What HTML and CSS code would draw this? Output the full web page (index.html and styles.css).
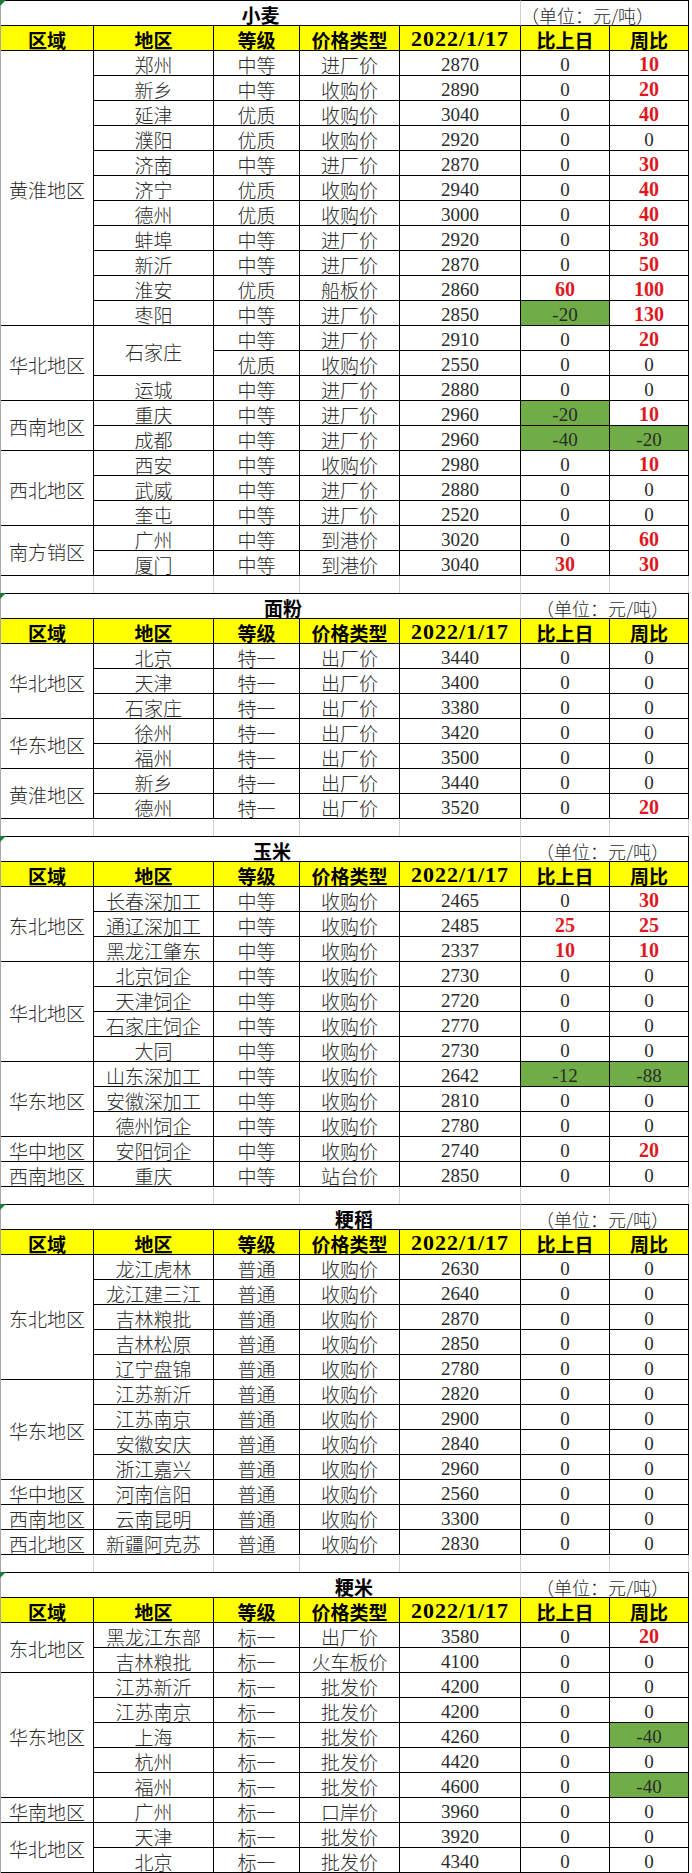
FILE: index.html
```html
<!DOCTYPE html>
<html lang="zh-CN">
<head>
<meta charset="utf-8">
<title>粮食价格</title>
<link rel="stylesheet" href="styles.css">
</head>
<body>

<section class="block">
  <div class="sheet">
    <div class="c ttl">小麦</div><div class="c unit unit-first">（单位：元/吨）</div>
    <div class="c hd">区域</div><div class="c hd">地区</div><div class="c hd">等级</div><div class="c hd">价格类型</div><div class="c hd date">2022/1/17</div><div class="c hd">比上日</div><div class="c hd">周比</div>

    <div class="c g s11">黄淮地区</div>
    <div class="c">郑州</div><div class="c">中等</div><div class="c">进厂价</div><div class="c n">2870</div><div class="c n">0</div><div class="c n up">10</div>
    <div class="c">新乡</div><div class="c">中等</div><div class="c">收购价</div><div class="c n">2890</div><div class="c n">0</div><div class="c n up">20</div>
    <div class="c">延津</div><div class="c">优质</div><div class="c">收购价</div><div class="c n">3040</div><div class="c n">0</div><div class="c n up">40</div>
    <div class="c">濮阳</div><div class="c">优质</div><div class="c">收购价</div><div class="c n">2920</div><div class="c n">0</div><div class="c n">0</div>
    <div class="c">济南</div><div class="c">中等</div><div class="c">进厂价</div><div class="c n">2870</div><div class="c n">0</div><div class="c n up">30</div>
    <div class="c">济宁</div><div class="c">优质</div><div class="c">收购价</div><div class="c n">2940</div><div class="c n">0</div><div class="c n up">40</div>
    <div class="c">德州</div><div class="c">优质</div><div class="c">收购价</div><div class="c n">3000</div><div class="c n">0</div><div class="c n up">40</div>
    <div class="c">蚌埠</div><div class="c">中等</div><div class="c">进厂价</div><div class="c n">2920</div><div class="c n">0</div><div class="c n up">30</div>
    <div class="c">新沂</div><div class="c">中等</div><div class="c">进厂价</div><div class="c n">2870</div><div class="c n">0</div><div class="c n up">50</div>
    <div class="c">淮安</div><div class="c">优质</div><div class="c">船板价</div><div class="c n">2860</div><div class="c n up">60</div><div class="c n up">100</div>
    <div class="c">枣阳</div><div class="c">中等</div><div class="c">进厂价</div><div class="c n">2850</div><div class="c n dn">-20</div><div class="c n up">130</div>

    <div class="c g s3">华北地区</div>
    <div class="c s2">石家庄</div><div class="c">中等</div><div class="c">进厂价</div><div class="c n">2910</div><div class="c n">0</div><div class="c n up">20</div>
    <div class="c">优质</div><div class="c">收购价</div><div class="c n">2550</div><div class="c n">0</div><div class="c n">0</div>
    <div class="c">运城</div><div class="c">中等</div><div class="c">进厂价</div><div class="c n">2880</div><div class="c n">0</div><div class="c n">0</div>

    <div class="c g s2">西南地区</div>
    <div class="c">重庆</div><div class="c">中等</div><div class="c">进厂价</div><div class="c n">2960</div><div class="c n dn">-20</div><div class="c n up">10</div>
    <div class="c">成都</div><div class="c">中等</div><div class="c">进厂价</div><div class="c n">2960</div><div class="c n dn">-40</div><div class="c n dn">-20</div>

    <div class="c g s3">西北地区</div>
    <div class="c">西安</div><div class="c">中等</div><div class="c">收购价</div><div class="c n">2980</div><div class="c n">0</div><div class="c n up">10</div>
    <div class="c">武威</div><div class="c">中等</div><div class="c">进厂价</div><div class="c n">2880</div><div class="c n">0</div><div class="c n">0</div>
    <div class="c">奎屯</div><div class="c">中等</div><div class="c">进厂价</div><div class="c n">2520</div><div class="c n">0</div><div class="c n">0</div>

    <div class="c g s2">南方销区</div>
    <div class="c">广州</div><div class="c">中等</div><div class="c">到港价</div><div class="c n">3020</div><div class="c n">0</div><div class="c n up">60</div>
    <div class="c">厦门</div><div class="c">中等</div><div class="c">到港价</div><div class="c n">3040</div><div class="c n up">30</div><div class="c n up">30</div>
  </div>
  <div class="sheet spacer"><div class="b"></div><div class="b"></div><div class="b"></div><div class="b"></div><div class="b"></div><div class="b"></div><div class="b"></div></div>
</section>

<section class="block">
  <div class="sheet">
    <div class="c ttl ttl-flour">面粉</div><div class="c unit">（单位：元/吨）</div>
    <div class="c hd">区域</div><div class="c hd">地区</div><div class="c hd">等级</div><div class="c hd">价格类型</div><div class="c hd date">2022/1/17</div><div class="c hd">比上日</div><div class="c hd">周比</div>

    <div class="c g s3">华北地区</div>
    <div class="c">北京</div><div class="c">特一</div><div class="c">出厂价</div><div class="c n">3440</div><div class="c n">0</div><div class="c n">0</div>
    <div class="c">天津</div><div class="c">特一</div><div class="c">出厂价</div><div class="c n">3400</div><div class="c n">0</div><div class="c n">0</div>
    <div class="c">石家庄</div><div class="c">特一</div><div class="c">出厂价</div><div class="c n">3380</div><div class="c n">0</div><div class="c n">0</div>

    <div class="c g s2">华东地区</div>
    <div class="c">徐州</div><div class="c">特一</div><div class="c">出厂价</div><div class="c n">3420</div><div class="c n">0</div><div class="c n">0</div>
    <div class="c">福州</div><div class="c">特一</div><div class="c">出厂价</div><div class="c n">3500</div><div class="c n">0</div><div class="c n">0</div>

    <div class="c g s2">黄淮地区</div>
    <div class="c">新乡</div><div class="c">特一</div><div class="c">出厂价</div><div class="c n">3440</div><div class="c n">0</div><div class="c n">0</div>
    <div class="c">德州</div><div class="c">特一</div><div class="c">出厂价</div><div class="c n">3520</div><div class="c n">0</div><div class="c n up">20</div>
  </div>
  <div class="sheet spacer"><div class="b"></div><div class="b"></div><div class="b"></div><div class="b"></div><div class="b"></div><div class="b"></div><div class="b"></div></div>
</section>

<section class="block">
  <div class="sheet">
    <div class="c ttl ttl-corn">玉米</div><div class="c unit">（单位：元/吨）</div>
    <div class="c hd">区域</div><div class="c hd">地区</div><div class="c hd">等级</div><div class="c hd">价格类型</div><div class="c hd date">2022/1/17</div><div class="c hd">比上日</div><div class="c hd">周比</div>

    <div class="c g s3">东北地区</div>
    <div class="c">长春深加工</div><div class="c">中等</div><div class="c">收购价</div><div class="c n">2465</div><div class="c n">0</div><div class="c n up">30</div>
    <div class="c">通辽深加工</div><div class="c">中等</div><div class="c">收购价</div><div class="c n">2485</div><div class="c n up">25</div><div class="c n up">25</div>
    <div class="c">黑龙江肇东</div><div class="c">中等</div><div class="c">收购价</div><div class="c n">2337</div><div class="c n up">10</div><div class="c n up">10</div>

    <div class="c g s4">华北地区</div>
    <div class="c">北京饲企</div><div class="c">中等</div><div class="c">收购价</div><div class="c n">2730</div><div class="c n">0</div><div class="c n">0</div>
    <div class="c">天津饲企</div><div class="c">中等</div><div class="c">收购价</div><div class="c n">2720</div><div class="c n">0</div><div class="c n">0</div>
    <div class="c">石家庄饲企</div><div class="c">中等</div><div class="c">收购价</div><div class="c n">2770</div><div class="c n">0</div><div class="c n">0</div>
    <div class="c">大同</div><div class="c">中等</div><div class="c">收购价</div><div class="c n">2730</div><div class="c n">0</div><div class="c n">0</div>

    <div class="c g s3">华东地区</div>
    <div class="c">山东深加工</div><div class="c">中等</div><div class="c">收购价</div><div class="c n">2642</div><div class="c n dn">-12</div><div class="c n dn">-88</div>
    <div class="c">安徽深加工</div><div class="c">中等</div><div class="c">收购价</div><div class="c n">2810</div><div class="c n">0</div><div class="c n">0</div>
    <div class="c">德州饲企</div><div class="c">中等</div><div class="c">收购价</div><div class="c n">2780</div><div class="c n">0</div><div class="c n">0</div>

    <div class="c g">华中地区</div>
    <div class="c">安阳饲企</div><div class="c">中等</div><div class="c">收购价</div><div class="c n">2740</div><div class="c n">0</div><div class="c n up">20</div>

    <div class="c g">西南地区</div>
    <div class="c">重庆</div><div class="c">中等</div><div class="c">站台价</div><div class="c n">2850</div><div class="c n">0</div><div class="c n">0</div>
  </div>
  <div class="sheet spacer"><div class="b"></div><div class="b"></div><div class="b"></div><div class="b"></div><div class="b"></div><div class="b"></div><div class="b"></div></div>
</section>

<section class="block">
  <div class="sheet">
    <div class="c ttl ttl-rice">粳稻</div><div class="c unit">（单位：元/吨）</div>
    <div class="c hd">区域</div><div class="c hd">地区</div><div class="c hd">等级</div><div class="c hd">价格类型</div><div class="c hd date">2022/1/17</div><div class="c hd">比上日</div><div class="c hd">周比</div>

    <div class="c g s5">东北地区</div>
    <div class="c">龙江虎林</div><div class="c">普通</div><div class="c">收购价</div><div class="c n">2630</div><div class="c n">0</div><div class="c n">0</div>
    <div class="c">龙江建三江</div><div class="c">普通</div><div class="c">收购价</div><div class="c n">2640</div><div class="c n">0</div><div class="c n">0</div>
    <div class="c">吉林粮批</div><div class="c">普通</div><div class="c">收购价</div><div class="c n">2870</div><div class="c n">0</div><div class="c n">0</div>
    <div class="c">吉林松原</div><div class="c">普通</div><div class="c">收购价</div><div class="c n">2850</div><div class="c n">0</div><div class="c n">0</div>
    <div class="c">辽宁盘锦</div><div class="c">普通</div><div class="c">收购价</div><div class="c n">2780</div><div class="c n">0</div><div class="c n">0</div>

    <div class="c g s4">华东地区</div>
    <div class="c">江苏新沂</div><div class="c">普通</div><div class="c">收购价</div><div class="c n">2820</div><div class="c n">0</div><div class="c n">0</div>
    <div class="c">江苏南京</div><div class="c">普通</div><div class="c">收购价</div><div class="c n">2900</div><div class="c n">0</div><div class="c n">0</div>
    <div class="c">安徽安庆</div><div class="c">普通</div><div class="c">收购价</div><div class="c n">2840</div><div class="c n">0</div><div class="c n">0</div>
    <div class="c">浙江嘉兴</div><div class="c">普通</div><div class="c">收购价</div><div class="c n">2960</div><div class="c n">0</div><div class="c n">0</div>

    <div class="c g">华中地区</div>
    <div class="c">河南信阳</div><div class="c">普通</div><div class="c">收购价</div><div class="c n">2560</div><div class="c n">0</div><div class="c n">0</div>

    <div class="c g">西南地区</div>
    <div class="c">云南昆明</div><div class="c">普通</div><div class="c">收购价</div><div class="c n">3300</div><div class="c n">0</div><div class="c n">0</div>

    <div class="c g">西北地区</div>
    <div class="c">新疆阿克苏</div><div class="c">普通</div><div class="c">收购价</div><div class="c n">2830</div><div class="c n">0</div><div class="c n">0</div>
  </div>
  <div class="sheet spacer"><div class="b"></div><div class="b"></div><div class="b"></div><div class="b"></div><div class="b"></div><div class="b"></div><div class="b"></div></div>
</section>

<section class="block">
  <div class="sheet">
    <div class="c ttl ttl-rice">粳米</div><div class="c unit">（单位：元/吨）</div>
    <div class="c hd">区域</div><div class="c hd">地区</div><div class="c hd">等级</div><div class="c hd">价格类型</div><div class="c hd date">2022/1/17</div><div class="c hd">比上日</div><div class="c hd">周比</div>

    <div class="c g s2">东北地区</div>
    <div class="c">黑龙江东部</div><div class="c">标一</div><div class="c">出厂价</div><div class="c n">3580</div><div class="c n">0</div><div class="c n up">20</div>
    <div class="c">吉林粮批</div><div class="c">标一</div><div class="c">火车板价</div><div class="c n">4100</div><div class="c n">0</div><div class="c n">0</div>

    <div class="c g s5">华东地区</div>
    <div class="c">江苏新沂</div><div class="c">标一</div><div class="c">批发价</div><div class="c n">4200</div><div class="c n">0</div><div class="c n">0</div>
    <div class="c">江苏南京</div><div class="c">标一</div><div class="c">批发价</div><div class="c n">4200</div><div class="c n">0</div><div class="c n">0</div>
    <div class="c">上海</div><div class="c">标一</div><div class="c">批发价</div><div class="c n">4260</div><div class="c n">0</div><div class="c n dn">-40</div>
    <div class="c">杭州</div><div class="c">标一</div><div class="c">批发价</div><div class="c n">4420</div><div class="c n">0</div><div class="c n">0</div>
    <div class="c">福州</div><div class="c">标一</div><div class="c">批发价</div><div class="c n">4600</div><div class="c n">0</div><div class="c n dn">-40</div>

    <div class="c g">华南地区</div>
    <div class="c">广州</div><div class="c">标一</div><div class="c">口岸价</div><div class="c n">3960</div><div class="c n">0</div><div class="c n">0</div>

    <div class="c g s2">华北地区</div>
    <div class="c">天津</div><div class="c">标一</div><div class="c">批发价</div><div class="c n">3920</div><div class="c n">0</div><div class="c n">0</div>
    <div class="c">北京</div><div class="c">标一</div><div class="c">批发价</div><div class="c n">4340</div><div class="c n">0</div><div class="c n">0</div>
  </div>
</section>

</body>
</html>
```

FILE: styles.css
```css
* {
  box-sizing: border-box;
  margin: 0;
  padding: 0;
}

html, body {
  background: #fff;
}

body {
  width: 692px;
  font-family: "Noto Sans CJK SC", "Noto Sans CJK JP", sans-serif;
  color: #2b2b2b;
}

.block {
  position: relative;
}

/* small green cell marker in the top-left corner of each sheet */
.block::before {
  content: "";
  position: absolute;
  left: 0;
  top: 0;
  width: 0;
  height: 0;
  border-top: 6px solid #1f7a3a;
  border-right: 6px solid transparent;
  z-index: 2;
}

.sheet {
  display: grid;
  grid-template-columns: 93px 120px 86px 100px 121px 89px 79px;
  grid-template-rows: 26px;
  grid-auto-rows: 25px;
  width: 689px;
  border-left: 1px solid #a8a8a8;
}

.c {
  display: flex;
  align-items: center;
  justify-content: center;
  border-right: 1px solid #000;
  border-bottom: 1px solid #000;
  font-size: 19px;
  font-weight: 300;
  line-height: 1;
  padding-top: 2px;
  white-space: nowrap;
}

/* title row */
.ttl {
  grid-column: span 5;
  border-top: 1px solid #000;
  border-right-color: #d0d0d0;
  font-weight: 700;
  font-size: 19px;
  color: #000;
  padding-top: 3px;
}

.ttl-flour { padding-left: 45px; }
.ttl-corn { padding-left: 23px; }
.ttl-rice { padding-left: 187px; }

.unit {
  grid-column: span 2;
  border-top: 1px solid #000;
  justify-content: flex-start;
  padding-left: 15px;
  padding-top: 3px;
  font-size: 18px;
}

.unit-first {
  padding-left: 0;
}

/* header row */
.hd {
  background: #ffff00;
  font-weight: 700;
  color: #000;
  font-size: 19px;
}

.hd.date {
  font-family: "Liberation Serif", serif;
  font-size: 22px;
  letter-spacing: 1px;
}

/* merged group cells */
.s2 { grid-row: span 2; }
.s3 { grid-row: span 3; }
.s4 { grid-row: span 4; }
.s5 { grid-row: span 5; }
.s11 { grid-row: span 11; }

.n {
  font-family: "Liberation Serif", serif;
  font-size: 19px;
  font-weight: 400;
}

.up {
  color: #e0181f;
  font-weight: 700;
  font-size: 20px;
}

.dn {
  background: #70ad47;
}

/* blank spacer row between sheets */
.spacer {
  grid-template-rows: 17px;
}

.b {
  border-right: 1px solid #d0d0d0;
}
```
